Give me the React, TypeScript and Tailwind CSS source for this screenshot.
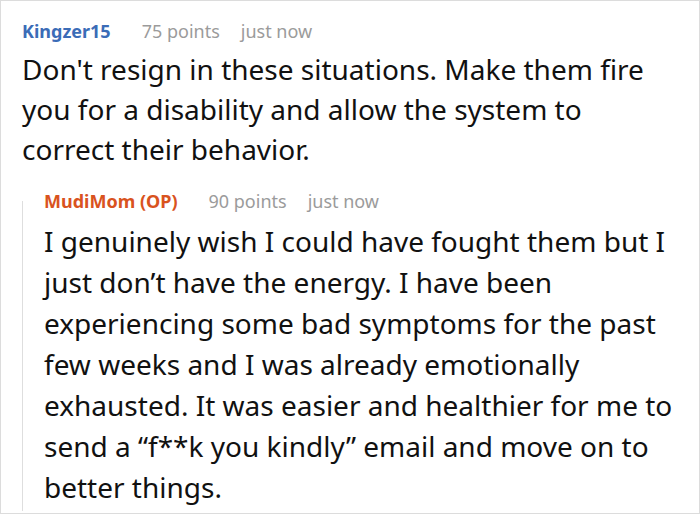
import React from "react";

const font = { fontFamily: '"Noto Sans", "Open Sans", sans-serif' };

function Meta({ name, color, points }: { name: string; color: string; points: string }) {
  return (
    <div className="flex items-baseline text-[18px] leading-[24px] whitespace-nowrap">
      <span className={`font-bold mr-[31px] ${color}`}>{name}</span>
      <span className="text-[#9b9b9b] mr-[21px]">{points}</span>
      <span className="text-[#9b9b9b]">just now</span>
    </div>
  );
}

const top = [
  "Don't resign in these situations. Make them fire",
  "you for a disability and allow the system to",
  "correct their behavior.",
];

const reply = [
  "I genuinely wish I could have fought them but I",
  "just don’t have the energy. I have been",
  "experiencing some bad symptoms for the past",
  "few weeks and I was already emotionally",
  "exhausted. It was easier and healthier for me to",
  "send a “f**k you kindly” email and move on to",
  "better things.",
];

export default function App() {
  return (
    <div style={font} className="w-[700px] h-[520px] bg-white overflow-hidden">
      <div className="h-[514px] border border-[#dcdcdc] pl-[21px] pr-2 pt-[18px]">
        {/* Top comment */}
        <Meta name="Kingzer15" color="text-[#3b6cb7]" points="75 points" />
        <div className="mt-[6px] text-[28px] leading-[40px] text-[#111] whitespace-nowrap">
          {top.map((l) => (
            <div key={l}>{l}</div>
          ))}
        </div>

        {/* Reply */}
        <div className="mt-[20px] flex">
          <div className="w-[1px] bg-[#dedede] mt-[12px] mb-[-3px]" />
          <div className="pl-[21px]">
            <Meta name="MudiMom (OP)" color="text-[#d9531e]" points="90 points" />
            <div className="mt-[8px] text-[28px] leading-[41px] text-[#111] whitespace-nowrap">
              {reply.map((l) => (
                <div key={l}>{l}</div>
              ))}
            </div>
          </div>
        </div>
      </div>
    </div>
  );
}
